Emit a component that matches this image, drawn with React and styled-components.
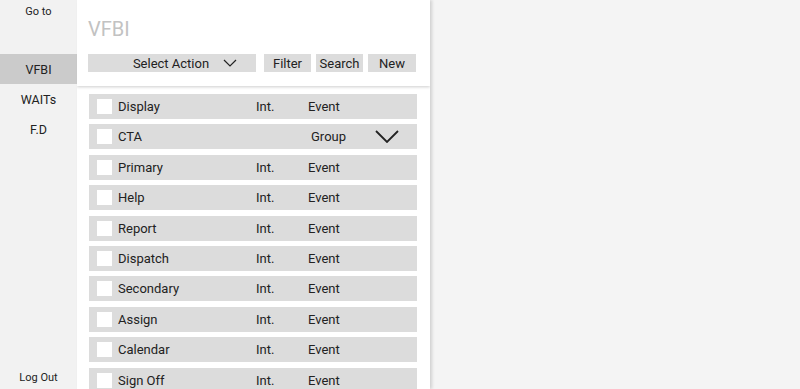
import React from "react";
import styled, { createGlobalStyle } from "styled-components";

const Global = createGlobalStyle`
  html, body { margin: 0; padding: 0; }
  body { background: #f4f4f4; font-family: Roboto, "Liberation Sans", sans-serif; color: #222; }
  #root { height: 389px; overflow: hidden; }
`;

const Layout = styled.div`
  display: flex;
  height: 389px;
  overflow: hidden;
`;

const Sidebar = styled.nav`
  width: 77px;
  flex: none;
  background: #f2f2f2;
  display: flex;
  flex-direction: column;
  font-size: 11px;
`;

const GoTo = styled.div`
  text-align: center;
  padding-top: 5px;
  height: 54px;
  box-sizing: border-box;
`;

const NavItem = styled.div`
  height: 30px;
  display: flex;
  align-items: center;
  justify-content: center;
  font-size: 12.5px;
  background: ${(p) => (p.$active ? "#cbcbcb" : "transparent")};
`;

const Spacer = styled.div`flex: 1;`;

const LogOut = styled.div`
  text-align: center;
  padding-bottom: 5px;
`;

const Panel = styled.main`
  width: 353px;
  flex: none;
  background: #fff;
  box-shadow: 2px 0 3px rgba(0, 0, 0, 0.15);
  display: flex;
  flex-direction: column;
  overflow: hidden;
`;

const Header = styled.header`
  flex: none;
  height: 86px;
  box-sizing: border-box;
  padding: 17px 13px 0 11px;
  box-shadow: 0 1px 3px rgba(0, 0, 0, 0.2);
  position: relative;
`;

const Title = styled.h1`
  margin: 0;
  font-weight: 400;
  font-size: 20px;
  line-height: 24px;
  color: #c2c2c2;
  height: 37px;
`;

const Toolbar = styled.div`
  display: flex;
  gap: 5px;
`;

const Button = styled.button`
  height: 18px;
  border: none;
  padding: 0;
  background: #dcdcdc;
  font-family: inherit;
  font-size: 13px;
  color: #222;
  width: ${(p) => p.$w}px;
  margin-right: ${(p) => p.$mr || 0}px;
  display: flex;
  align-items: center;
  justify-content: center;
  gap: 14px;
`;

const List = styled.div`
  flex: none;
  display: flex;
  flex-direction: column;
  gap: 5.4px;
  padding: 8px 13px 0 12px;
`;

const Row = styled.div`
  height: 25px;
  flex: none;
  background: #dcdcdc;
  display: flex;
  align-items: center;
  font-size: 13px;
  padding-left: 8px;
`;

const Check = styled.span`
  width: 15px;
  height: 15px;
  background: #fff;
  flex: none;
  margin-right: 6px;
`;

const Name = styled.span`width: 138px;`;
const Kind = styled.span`width: ${(p) => p.$w}px;`;
const Label = styled.span`margin-left: 26px;`;

const Chevron = ({ w, h, sw }) => (
  <svg width={w} height={h} viewBox={`0 0 ${w} ${h}`} fill="none">
    <polyline points={`1,1 ${w / 2},${h - 1} ${w - 1},1`} stroke="#222" strokeWidth={sw} />
  </svg>
);

const rows = [
  ["Display", "Int.", "Event"],
  ["CTA", "", "Group"],
  ["Primary", "Int.", "Event"],
  ["Help", "Int.", "Event"],
  ["Report", "Int.", "Event"],
  ["Dispatch", "Int.", "Event"],
  ["Secondary", "Int.", "Event"],
  ["Assign", "Int.", "Event"],
  ["Calendar", "Int.", "Event"],
  ["Sign Off", "Int.", "Event"],
];

export default function App() {
  return (
    <>
      <Global />
      <Layout>
        <Sidebar>
          <GoTo>Go to</GoTo>
          <NavItem $active>VFBI</NavItem>
          <NavItem>WAITs</NavItem>
          <NavItem>F.D</NavItem>
          <Spacer />
          <LogOut>Log Out</LogOut>
        </Sidebar>
        <Panel>
          <Header>
            <Title>VFBI</Title>
            <Toolbar>
              <Button $w={168} $mr={3}>
                <Label>Select Action</Label>
                <Chevron w={14} h={8} sw={1.2} />
              </Button>
              <Button $w={47}>Filter</Button>
              <Button $w={47}>Search</Button>
              <Button $w={48}>New</Button>
            </Toolbar>
          </Header>
          <List>
            {rows.map(([n, a, b]) => (
              <Row key={n}>
                <Check />
                <Name>{n}</Name>
                {a ? <Kind $w={52}>{a}</Kind> : <Kind $w={55} />}
                <Kind $w={a ? 60 : 64}>{b}</Kind>
                {!a && <Chevron w={24} h={13} sw={1.8} />}
              </Row>
            ))}
          </List>
        </Panel>
      </Layout>
    </>
  );
}
